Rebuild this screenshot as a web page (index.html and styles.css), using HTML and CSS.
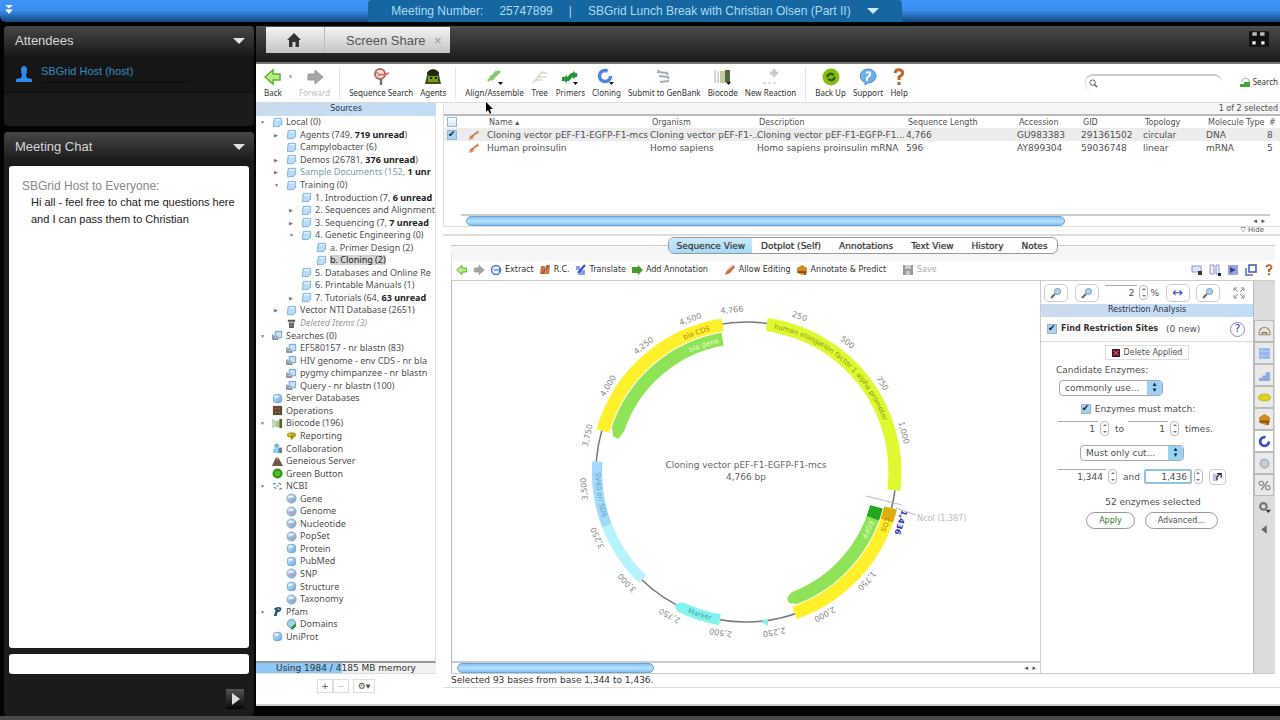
FILE: index.html
```html
<!DOCTYPE html>
<html lang="en">
    <head>
        <meta charset="utf-8">
        <title>Screen Share</title>
        <meta name="viewport" content="width=device-width, initial-scale=1.0">
        <link rel="stylesheet" href="styles.css">
    </head>
<body>
    <!-- icon set -->
    <svg class="defs" aria-hidden="true">
        <linearGradient id="gBlue" x1="0" y1="0" x2="1" y2="1"><stop offset="0" stop-color="#d9efff"/><stop offset="1" stop-color="#5fa4dc"/></linearGradient>
        <symbol id="folder" viewBox="0 0 12 12"><path d="M2.500 1.500h8v7l-1.500 0-1 2h-6.500v-2z" fill="#b9dcf8" stroke="#78aede"/><path d="M3.500 3h6" stroke="#e6f5ff" stroke-width="1.500"/></symbol>
        <symbol id="search-folder" viewBox="0 0 12 12"><path d="M3.500 1.500h7v7h-7z" fill="#c4e0f8" stroke="#6f9ac9"/><path d="M1 5v5h6" fill="none" stroke="#667a99" stroke-width="1.500"/><circle cx="4" cy="8" r="1.500" fill="#fff" stroke="#667"/></symbol>
        <symbol id="trash" viewBox="0 0 12 12"><path d="M2 2h8v2H2zM3 5h6l-.5 6h-5z" fill="#555"/><path d="M4.500 5v5M6 5v5M7.500 5v5" stroke="#aaa" stroke-width=".5"/></symbol>
        <symbol id="globe" viewBox="0 0 12 12"><circle cx="6" cy="6" r="5" fill="url(#gBlue)" stroke="#8aa3bd"/><path d="M3 4h5" stroke="#fff" stroke-width="1.500"/><path d="M2 7.500h8" stroke="#d08a92"/></symbol>
        <symbol id="globe-blue" viewBox="0 0 12 12"><rect x="1.500" y="1.500" width="9" height="9" rx="3" fill="url(#gBlue)" stroke="#7aa5cf"/><path d="M3 4h4" stroke="#fff" stroke-width="1.500"/></symbol>
        <symbol id="ops" viewBox="0 0 12 12"><path d="M1 1h10v10H1z" fill="#5c4632"/><path d="M3 3h2v2H3zM7 3h2v2H7zM3 7h2v2H3zM7 7h2v2H7z" fill="#8f6a49"/></symbol>
        <symbol id="barcode" viewBox="0 0 12 12"><path d="M1 1v10M3 2v8" stroke="#9aa58c"/><path d="M4 3h4v7H4z" fill="#a9c47e"/><path d="M8 1h3v10H8z" fill="#4c6534"/></symbol>
        <symbol id="report" viewBox="0 0 12 12"><ellipse cx="6" cy="5.500" rx="5" ry="3" fill="#b8a416"/><path d="M5 7h4l-3 4z" fill="#8d7c0e"/><circle cx="4" cy="5" r="1" fill="#f3e87b"/></symbol>
        <symbol id="people" viewBox="0 0 12 12"><circle cx="5" cy="3" r="2.500" fill="#6db6e3"/><path d="M1 11V7l4-2 3 2v4z" fill="#8bcdf0"/><path d="M7 5h4v6H7z" fill="#5d87a7"/></symbol>
        <symbol id="volcano" viewBox="0 0 12 12"><path d="M0 11l4-9h3l5 9z" fill="#6e5449"/><path d="M4 2l2 4 1-4z" fill="#c97b5b"/></symbol>
        <symbol id="green-dot" viewBox="0 0 12 12"><circle cx="6" cy="6" r="5.500" fill="#2f9a12"/><circle cx="6" cy="6" r="3" fill="#56bb2c"/></symbol>
        <symbol id="ncbi" viewBox="0 0 12 12"><path d="M1 3h3M7 2l3 2M2 7l3 1M8 9l3-1M5 5l2 1" stroke="#7b8ea3" stroke-width="1.500"/></symbol>
        <symbol id="pfam" viewBox="0 0 12 12"><path d="M2 3q4-3 8-1 1 4-4 5l-1 4H2l2-6z" fill="#1f5478"/><path d="M6 3.500h2" stroke="#9cc4dd" stroke-width="1.500"/></symbol>
        <symbol id="domains" viewBox="0 0 12 12"><circle cx="6" cy="5" r="4.500" fill="#9fd4e4" stroke="#5a94a4"/><path d="M5 10l5-5 1 3-4 4z" fill="#2e8d34"/></symbol>
        <symbol id="left-green" viewBox="0 0 18 18"><path d="M1 9l8-7v4h7v6H9v4z" fill="#b6ec84" stroke="#5eb530" stroke-width="1.500"/></symbol>
        <symbol id="right-gray" viewBox="0 0 18 18"><path d="M17 9L9 2v4H2v6h7v4z" fill="#a5a5a5" stroke="#999"/></symbol>
        <symbol id="seq-search" viewBox="0 0 18 18"><circle cx="8" cy="6" r="5" fill="#f4e4df" stroke="#b06a5f" stroke-width="2"/><path d="M4 4q5 5 13 1M6 8q4-3 8 0" stroke="#dd6a5c" fill="none" stroke-width="1.500"/><path d="M9 11v6" stroke="#8a6a58" stroke-width="2.500"/></symbol>
        <symbol id="agents" viewBox="0 0 18 18"><path d="M3 7q1-6 6-6t6 6l2 9H1z" fill="#3d5214"/><ellipse cx="9" cy="5" rx="6" ry="3" fill="#22280e"/><path d="M4 8h10v6H4z" fill="#779b1a"/><path d="M6 10h2M11 10h2" stroke="#171e05" stroke-width="2"/></symbol>
        <symbol id="align" viewBox="0 0 18 18"><path d="M2 13L11 3M5 12l9-9M4 8l4 3" stroke="#86cb70" stroke-width="2.500"/><path d="M12 14h5l-2.500 3z" fill="#111"/></symbol>
        <symbol id="tree-ic" viewBox="0 0 18 18"><path d="M2 15l5-6 5-6M7 9h8M4 12h7M9 5h7" stroke="#d6ddcb" stroke-width="1.500" fill="none"/></symbol>
        <symbol id="primer" viewBox="0 0 18 18"><path d="M1 11h6l4-4h5" stroke="#23973a" stroke-width="4" fill="none"/><path d="M12 3l5 4-5 4zM6 7l-5 4 5 4z" fill="#23973a"/><path d="M12 14h5l-2.500 3z" fill="#111"/></symbol>
        <symbol id="clone" viewBox="0 0 18 18"><circle cx="8" cy="8" r="5.500" fill="none" stroke="#4c86e2" stroke-width="3.500" stroke-dasharray="28 8"/><path d="M12 14h5l-2.500 3z" fill="#111"/></symbol>
        <symbol id="submit" viewBox="0 0 18 18"><path d="M4 2l-1 2 9 1 1 2M4 8l9 1 1 2M5 14l9-1" stroke="#a3b1b6" stroke-width="2" fill="none"/></symbol>
        <symbol id="bio" viewBox="0 0 18 18"><path d="M1 2v13M4 3v12" stroke="#abb2a4"/><path d="M6 3h6v12H6z" fill="#bdcfa0"/><path d="M11 2h5v12h-5z" fill="#526a3c"/><path d="M12 14h5l-2.500 3z" fill="#111"/></symbol>
        <symbol id="reaction" viewBox="0 0 18 18"><path d="M12 1v8M8 5h8" stroke="#c9c9c9" stroke-width="3"/><path d="M1 15h13" stroke="#ddd" stroke-width="2" stroke-dasharray="3 2"/></symbol>
        <symbol id="backup" viewBox="0 0 18 18"><circle cx="9" cy="9" r="8.500" fill="#86bd10"/><path d="M5 9q2-5 7-2M13 9q-2 5-7 2" stroke="#34610a" stroke-width="2.500" fill="none"/></symbol>
        <symbol id="support" viewBox="0 0 18 18"><path d="M9 1a8 7 0 0 1 0 14l-3 2v-2.500A7.500 7 0 0 1 9 1z" fill="#6db0ee" stroke="#4b8cd2"/><path d="M7 5q5-2 4 2l-3 3v3" stroke="#fff" stroke-width="2" fill="none"/></symbol>
        <symbol id="help" viewBox="0 0 18 18"><path d="M5 5q1-4 5-3t2 5L9 9v3M9 14v3" stroke="#b9652c" stroke-width="3" fill="none"/></symbol>
        <symbol id="zoom-ic" viewBox="0 0 12 12"><circle cx="7.500" cy="4.500" r="3" fill="#a8d5f5" stroke="#7898ac"/><path d="M5 7l-4 4" stroke="#666" stroke-width="2"/></symbol>
        <symbol id="pencil" viewBox="0 0 12 12"><path d="M1 11l2-5 6-5 2 2-5 6z" fill="#c9663f"/><path d="M3 7l6-5" stroke="#f4c3a5"/></symbol>
        <symbol id="dna" viewBox="0 0 12 12"><path d="M1 11l1-4 4-2 4-4 1 3-4 2-2 4z" fill="#dd9a68"/><path d="M2 9l7-6" stroke="#b5673a" fill="none"/></symbol>
        <symbol id="extract" viewBox="0 0 12 12"><circle cx="6" cy="6" r="4.500" fill="#e6f0ff" stroke="#4a7bd0" stroke-width="1.500"/><path d="M4 6h7M9 4l2 2-2 2" stroke="#3264c5" fill="none"/></symbol>
        <symbol id="rc" viewBox="0 0 12 12"><path d="M2 2h4v8H1zM7 1h4l-1 9H6z" fill="#c97546"/><path d="M3 10l6-8" stroke="#8c3f20"/></symbol>
        <symbol id="translate" viewBox="0 0 12 12"><path d="M1 2h4v4H1zM6 6h4v5H3z" fill="#8d9df0"/><path d="M3 9l7-8" stroke="#3848c4" stroke-width="2"/></symbol>
        <symbol id="add-ann" viewBox="0 0 12 12"><path d="M1 3h6V1l5 5-5 5V9H1z" fill="#479c2b"/></symbol>
        <symbol id="box" viewBox="0 0 12 12"><path d="M1 4l5-3 5 3v5l-4 2-6-2z" fill="#d28a26"/><path d="M2 8h7v3" stroke="#8a5412" stroke-width="2" fill="none"/></symbol>
        <symbol id="save" viewBox="0 0 12 12"><path d="M1 1h10v10H1z" fill="#999"/><path d="M3 1h6v4H3zM4 7h4v4H4z" fill="#ccc"/></symbol>
    </svg>

    <header class="topbar">
        <svg class="chevrons" viewBox="0 0 8 12"><path d="M0 1h8L4 5zM0 6h8l-4 5z" fill="#fff"/></svg>
        <div class="meeting">
            <span>Meeting Number:</span><span class="meeting-id">25747899</span><span class="bar">|</span><span>SBGrid Lunch Break with Christian Olsen (Part II)</span>
            <i class="down"></i>
        </div>
    </header>

    <div class="main">
        <aside class="side">
            <section class="panel attendees">
                <h2>Attendees <i class="down"></i></h2>
                <div class="person">
                    <svg viewBox="0 0 16 16"><path d="M5 4q0-4 3-4t3 4-1 5l1 3 5 1v3H0v-3l5-1 1-3q-1-1-1-5z" fill="#2c8cf0"/></svg>
                    <span>SBGrid Host (host)</span>
                </div>
            </section>
            <section class="panel chat">
                <h2>Meeting Chat <i class="down"></i></h2>
                <div class="log">
                    <p class="from">SBGrid Host to Everyone:</p>
                    <p class="msg">Hi all - feel free to chat me questions here and I can pass them to Christian</p>
                </div>
                <input class="chat-input" type="text" aria-label="Message">
                <button class="send" aria-label="Send"><svg viewBox="0 0 18 18"><path d="M6 3l8 6-8 6z" fill="#ddd"/></svg></button>
            </section>
        </aside>

        <div class="stage">
            <nav class="tabs">
                <button class="tab home" aria-label="Home"><svg viewBox="0 0 14 14"><path d="M7 0l7 7h-2v7H8.500V9h-3v5H2V7H0z" fill="#333"/></svg></button>
                <button class="tab">Screen Share <span class="close">×</span></button>
                <svg class="full" viewBox="0 0 18 14"><path d="M0 0h18v14H0z" fill="#111"/><path d="M3 1h4v3H3zM10 1h4v3h-4z" fill="#bbb"/><path d="M3 9h3v3H3zM11 9h3v3h-3z" fill="#eee"/></svg>
            </nav>

            <div class="app">
                <div class="toolbar">
                    <button><svg><use href="#left-green"/></svg>Back</button>
                    <i class="dot"></i>
                    <button class="off"><svg><use href="#right-gray"/></svg>Forward</button>
                    <i class="sep"></i>
                    <button><svg><use href="#seq-search"/></svg>Sequence Search</button>
                    <button><svg><use href="#agents"/></svg>Agents</button>
                    <i class="sep"></i>
                    <button><svg><use href="#align"/></svg>Align/Assemble</button>
                    <button><svg><use href="#tree-ic"/></svg>Tree</button>
                    <button><svg><use href="#primer"/></svg>Primers</button>
                    <button><svg><use href="#clone"/></svg>Cloning</button>
                    <button><svg><use href="#submit"/></svg>Submit to GenBank</button>
                    <button><svg><use href="#bio"/></svg>Biocode</button>
                    <button><svg><use href="#reaction"/></svg>New Reaction</button>
                    <i class="sep"></i>
                    <button><svg><use href="#backup"/></svg>Back Up</button>
                    <button><svg><use href="#support"/></svg>Support</button>
                    <button><svg><use href="#help"/></svg>Help</button>
                    <div class="find">
                        <svg viewBox="0 0 10 10"><circle cx="4" cy="4" r="3" fill="none" stroke="#555"/><path d="M6 6l3 3" stroke="#555" stroke-width="1.500"/></svg>
                        <input type="text" aria-label="Search">
                    </div>
                    <button class="more"><svg viewBox="0 0 12 12"><path d="M3 6V4q3-4 7 0v2" fill="none" stroke="#aaa"/><path d="M1 8h4V6h6v5H1z" fill="#4aa63a"/></svg>Search</button>
                </div>

                <div class="body">
                    <div class="sources">
                        <h3 class="bluebar">Sources</h3>
                        <ul class="tree">
                            <li class="open"><svg><use href="#folder"/></svg>Local (0)</li>
                            <li class="l1 shut"><svg><use href="#folder"/></svg>Agents (749, <b>719 unread</b>)</li>
                            <li class="l1"><svg><use href="#folder"/></svg>Campylobacter (6)</li>
                            <li class="l1 shut"><svg><use href="#folder"/></svg>Demos (26781, <b>376 unread</b>)</li>
                            <li class="l1 shut sample"><svg><use href="#folder"/></svg>Sample Documents (152, <b>1 unr</b></li>
                            <li class="l1 open"><svg><use href="#folder"/></svg>Training (0)</li>
                            <li class="l2"><svg><use href="#folder"/></svg>1. Introduction (7, <b>6 unread</b></li>
                            <li class="l2 shut"><svg><use href="#folder"/></svg>2. Sequences and Alignment</li>
                            <li class="l2 shut"><svg><use href="#folder"/></svg>3. Sequencing (7, <b>7 unread</b></li>
                            <li class="l2 open"><svg><use href="#folder"/></svg>4. Genetic Engineering (0)</li>
                            <li class="l3"><svg><use href="#folder"/></svg>a. Primer Design (2)</li>
                            <li class="l3"><svg><use href="#folder"/></svg><span class="picked">b. Cloning (2)</span></li>
                            <li class="l2"><svg><use href="#folder"/></svg>5. Databases and Online Re</li>
                            <li class="l2"><svg><use href="#folder"/></svg>6. Printable Manuals (1)</li>
                            <li class="l2 shut"><svg><use href="#folder"/></svg>7. Tutorials (64, <b>63 unread</b></li>
                            <li class="l1 shut"><svg><use href="#folder"/></svg>Vector NTI Database (2651)</li>
                            <li class="l1 deleted"><svg><use href="#trash"/></svg>Deleted Items (3)</li>
                            <li class="open"><svg><use href="#search-folder"/></svg>Searches (0)</li>
                            <li class="l1"><svg><use href="#search-folder"/></svg>EF580157 - nr blastn (83)</li>
                            <li class="l1"><svg><use href="#search-folder"/></svg>HIV genome - env CDS - nr bla</li>
                            <li class="l1"><svg><use href="#search-folder"/></svg>pygmy chimpanzee - nr blastn</li>
                            <li class="l1"><svg><use href="#search-folder"/></svg>Query - nr blastn (100)</li>
                            <li><svg><use href="#globe-blue"/></svg>Server Databases</li>
                            <li><svg><use href="#ops"/></svg>Operations</li>
                            <li class="open"><svg><use href="#barcode"/></svg>Biocode (196)</li>
                            <li class="l1"><svg><use href="#report"/></svg>Reporting</li>
                            <li><svg><use href="#people"/></svg>Collaboration</li>
                            <li><svg><use href="#volcano"/></svg>Geneious Server</li>
                            <li><svg><use href="#green-dot"/></svg>Green Button</li>
                            <li class="open"><svg><use href="#ncbi"/></svg>NCBI</li>
                            <li class="l1"><svg><use href="#globe"/></svg>Gene</li>
                            <li class="l1"><svg><use href="#globe"/></svg>Genome</li>
                            <li class="l1"><svg><use href="#globe"/></svg>Nucleotide</li>
                            <li class="l1"><svg><use href="#globe"/></svg>PopSet</li>
                            <li class="l1"><svg><use href="#globe-blue"/></svg>Protein</li>
                            <li class="l1"><svg><use href="#globe-blue"/></svg>PubMed</li>
                            <li class="l1"><svg><use href="#globe"/></svg>SNP</li>
                            <li class="l1"><svg><use href="#globe-blue"/></svg>Structure</li>
                            <li class="l1"><svg><use href="#globe"/></svg>Taxonomy</li>
                            <li class="open"><svg><use href="#pfam"/></svg>Pfam</li>
                            <li class="l1"><svg><use href="#domains"/></svg>Domains</li>
                            <li><svg><use href="#globe-blue"/></svg>UniProt</li>
                        </ul>
                        <div class="memory">Using 1984 / 4185 MB memory</div>
                        <div class="tree-tools">
                            <button>+</button><button class="dim">−</button><button class="gear">⚙▾</button>
                        </div>
                    </div>

                    <div class="work">
                        <div class="docs">
                            <div class="count">1 of 2 selected</div>
                            <table>
                                <colgroup><col class="c-check"><col class="c-icon"><col class="c-name"><col class="c-org"><col class="c-desc"><col class="c-len"><col class="c-acc"><col class="c-gid"><col class="c-topo"><col class="c-mol"><col></colgroup>
                                <thead>
                                    <tr><th><input type="checkbox" aria-label="All"></th><th></th><th>Name ▴</th><th>Organism</th><th>Description</th><th>Sequence Length</th><th>Accession</th><th>GID</th><th>Topology</th><th>Molecule Type</th><th>#</th></tr>
                                </thead>
                                <tbody>
                                    <tr class="selected"><td><input type="checkbox" checked aria-label="Cloning vector"></td><td><svg><use href="#dna"/></svg></td><td>Cloning vector pEF-F1-EGFP-F1-mcs</td><td>Cloning vector pEF-F1-...</td><td>Cloning vector pEF-F1-EGFP-F1...</td><td>4,766</td><td>GU983383</td><td>291361502</td><td>circular</td><td>DNA</td><td>8</td></tr>
                                    <tr><td></td><td><svg><use href="#dna"/></svg></td><td>Human proinsulin</td><td>Homo sapiens</td><td>Homo sapiens proinsulin mRNA</td><td>596</td><td>AY899304</td><td>59036748</td><td>linear</td><td>mRNA</td><td>5</td></tr>
                                </tbody>
                            </table>
                            <div class="scroll docs-scroll"><div class="thumb"></div><span>◂&nbsp;&nbsp;▸</span></div>
                        </div>
                        <div class="hide">▽ Hide</div>

                        <div class="viewer">
                            <div class="views">
                                <button class="on">Sequence View</button><button>Dotplot (Self)</button><button>Annotations</button><button>Text View</button><button>History</button><button>Notes</button>
                            </div>
                            <div class="actions">
                                <button aria-label="Previous"><svg><use href="#left-green"/></svg></button>
                                <button aria-label="Next"><svg><use href="#right-gray"/></svg></button>
                                <button><svg><use href="#extract"/></svg>Extract</button>
                                <button><svg><use href="#rc"/></svg>R.C.</button>
                                <button><svg><use href="#translate"/></svg>Translate</button>
                                <button><svg><use href="#add-ann"/></svg>Add Annotation</button>
                                <button class="spaced"><svg><use href="#pencil"/></svg>Allow Editing</button>
                                <button><svg><use href="#box"/></svg>Annotate &amp; Predict</button>
                                <button class="spaced off"><svg><use href="#save"/></svg>Save</button>
                                <div class="right">
                                    <svg viewBox="0 0 12 12"><path d="M1 2h9v6H1z" fill="#dfe5fb" stroke="#8a96cc"/><path d="M7 7h4v4H7z" fill="#335"/></svg>
                                    <svg viewBox="0 0 12 12"><path d="M1 1h4v9H1zM7 1h3v9H7z" fill="#eef" stroke="#8a96cc"/><path d="M9 9h3v3H9z" fill="#224"/></svg>
                                    <svg viewBox="0 0 12 12"><path d="M1 1h10v10H1z" fill="#98a3dc"/><path d="M3 3l6 3-6 3z" fill="#3b478f"/></svg>
                                    <svg viewBox="0 0 12 12"><path d="M4 1h7v7H4z" fill="#fff" stroke="#4458a8" stroke-width="1.500"/><path d="M1 4v7h7" fill="none" stroke="#7d8fd6" stroke-width="2"/></svg>
                                    <svg><use href="#help"/></svg>
                                </div>
                            </div>

                            <div class="split">
                                <div class="canvas">
                                    <svg class="plasmid" viewBox="0 0 588 380">
                                        <g transform="translate(294 191)">
                                            <defs>
                                                <path id="outer" d="M0 146A146 146 0 1 1 1 146"/>
                                                <path id="inner" d="M0 132A132 132 0 1 1 1 132"/>
                                                <path id="back" d="M0 -151A151 151 0 1 0 1 -151"/>
                                            </defs>
                                            <circle r="150" fill="none" stroke="#777" stroke-width="1.500"/>
                                            <!-- arcs start at 3 o'clock, so turn each by its angle minus 90 -->
                                            <g class="arcs" fill="none">
                                                <circle r="149" pathLength="360" stroke="#e0f832" stroke-dasharray="89 271" transform="rotate(-82)"/>
                                                <circle r="149" pathLength="360" stroke="#fff02c" stroke-dasharray="65 295" transform="rotate(-164)"/>
                                                <circle r="135" pathLength="360" stroke="#8ee356" stroke-dasharray="62 298" transform="rotate(-162)"/>
                                                <circle r="149" pathLength="360" stroke="#b5f3fd" stroke-dasharray="50 310" transform="rotate(134)" stroke-width="10"/>
                                                <circle r="149" pathLength="360" stroke="#a3d9fb" stroke-dasharray="25 335" transform="rotate(159)" stroke-width="10"/>
                                                <circle r="150" pathLength="360" stroke="#83f4ed" stroke-dasharray="16 344" transform="rotate(100)" stroke-width="11"/>
                                                <circle r="149" pathLength="360" stroke="#fff02c" stroke-dasharray="57 303" transform="rotate(14)"/>
                                                <circle r="149" pathLength="360" stroke="#dcae12" stroke-dasharray="5 355" transform="rotate(14)"/>
                                                <circle r="135" pathLength="360" stroke="#8ee356" stroke-dasharray="54 306" transform="rotate(15)"/>
                                                <circle r="135" pathLength="360" stroke="#22a81c" stroke-dasharray="5 355" transform="rotate(15)"/>
                                            </g>
                                            <path d="M-134 -44.500L-133 -36L-128 -33L-122 -40.500zM51 132L43 131L41 126L46 119.500z" fill="#8ee356"/>
                                            <path d="M15 150l7-4v8zM-68 140L-72 133L-63 130z" fill="#83f4ed"/>
                                            <path d="M120 24l36 9M150 36l20 7" stroke="#aaa" stroke-width=".8"/>
                                            <g class="ann">
                                                <text fill="#8c9a18"><textPath href="#outer" startOffset="53%">human elongation factor 1 alpha promoter</textPath></text>
                                                <text fill="#b08820"><textPath href="#outer" startOffset="43%">bla CDS</textPath></text>
                                                <text fill="#e8ffd5"><textPath href="#inner" startOffset="43%">bla gene</textPath></text>
                                                <text fill="#6c9fc7"><textPath href="#back" startOffset="25%">SV40 ori SDS</textPath></text>
                                                <text fill="#b08820"><textPath href="#outer" startOffset="80%">CDS</textPath></text>
                                                <text fill="#e8ffd5"><textPath href="#inner" startOffset="81%">EGFP</textPath></text>
                                                <text fill="#3fa8a0" transform="rotate(18) translate(0 152)" text-anchor="middle">Marker</text>
                                            </g>
                                            <g class="ticks">
                                                <text transform="rotate(-5) translate(0 -160)">4,766</text>
                                                <text transform="rotate(19) translate(0 -162)">250</text>
                                                <text transform="rotate(38) translate(0 -162)">500</text>
                                                <text transform="rotate(57) translate(0 -160)">750</text>
                                                <text transform="rotate(76) translate(0 -160)">1,000</text>
                                                <text class="here" transform="rotate(108) translate(0 -160)">1,436</text>
                                                <text transform="rotate(132) translate(0 -160)">1,750</text>
                                                <text transform="rotate(151) translate(0 -160)">2,000</text>
                                                <text transform="rotate(170) translate(0 -160)">2,250</text>
                                                <text transform="rotate(189) translate(0 -160)">2,500</text>
                                                <text transform="rotate(208) translate(0 -160)">2,750</text>
                                                <text transform="rotate(227) translate(0 -160)">3,000</text>
                                                <text transform="rotate(246) translate(0 -160)">3,250</text>
                                                <text transform="rotate(264) translate(0 -160)">3,500</text>
                                                <text transform="rotate(283) translate(0 -160)">3,750</text>
                                                <text transform="rotate(302) translate(0 -160)">4,000</text>
                                                <text transform="rotate(321) translate(0 -160)">4,250</text>
                                                <text transform="rotate(340) translate(0 -160)">4,500</text>
                                            </g>
                                            <text class="site" x="171" y="49">NcoI (1,387)</text>
                                            <text class="label" y="-4">Cloning vector pEF-F1-EGFP-F1-mcs</text>
                                            <text class="label" y="8">4,766 bp</text>
                                        </g>
                                    </svg>
                                    <div class="scroll map-scroll"><div class="thumb"></div><span>◂&nbsp;&nbsp;▸</span></div>
                                </div>

                                <div class="options">
                                    <div class="zooms">
                                        <button aria-label="Zoom in"><svg><use href="#zoom-ic"/></svg></button>
                                        <button aria-label="Zoom out"><svg><use href="#zoom-ic"/></svg></button>
                                        <label class="pct"><input type="text" value="2"><i class="spin"></i>%</label>
                                        <button class="blue" aria-label="Fit width">↔</button>
                                        <button aria-label="Zoom selection"><svg><use href="#zoom-ic"/></svg></button>
                                        <button class="plain" aria-label="Full view"><svg viewBox="0 0 12 12"><path d="M1 4V1h3M8 1h3v3M11 8v3H8M4 11H1V8M2 2l3 3M10 2L7 5M10 10L7 7M2 10l3-3" fill="none" stroke="#888"/></svg></button>
                                    </div>
                                    <h3 class="bluebar">Restriction Analysis</h3>
                                    <div class="find-sites">
                                        <label><input type="checkbox" checked><b>Find Restriction Sites</b></label><span>(0 new)</span>
                                        <button class="round" aria-label="Help">?</button>
                                    </div>
                                    <div class="form">
                                        <button class="delete"><svg viewBox="0 0 10 10"><path d="M0 0h10v10H0z" fill="#48121e"/><path d="M2 2l6 6M8 2L2 8" stroke="#e0566b" stroke-width="1.500"/></svg>Delete Applied</button>
                                        <label class="cand" for="enzymes">Candidate Enzymes:</label>
                                        <div class="drop start"><select id="enzymes"><option>commonly use...</option></select><i>▴<br>▾</i></div>
                                        <label class="match"><input type="checkbox" checked>Enzymes must match:</label>
                                        <div class="line"><input type="text" value="1" aria-label="Least cuts"><i class="spin"></i><span>to</span><input type="text" value="1" aria-label="Most cuts"><i class="spin"></i><span>times.</span></div>
                                        <div class="drop mid"><select aria-label="Cut rule"><option>Must only cut...</option></select><i>▴<br>▾</i></div>
                                        <div class="line wide"><input type="text" value="1,344" aria-label="From base"><i class="spin"></i><span>and</span><input class="focus" type="text" value="1,436" aria-label="To base"><i class="spin"></i><button class="pick" aria-label="Use selection"><svg viewBox="0 0 12 12"><path d="M1 2h5v9H1z" fill="#b9c3ee"/><path d="M6 10V6l4-4M6 2h5v5" fill="none" stroke="#223" stroke-width="1.500"/></svg></button></div>
                                        <p>52 enzymes selected</p>
                                        <div class="buttons"><button class="pill apply">Apply</button><button class="pill">Advanced...</button></div>
                                    </div>
                                </div>

                                <div class="strip">
                                    <button aria-label="General"><svg viewBox="0 0 12 12"><path d="M1 7a5 5 0 0 1 10 0v2H1z" fill="#e7e1cb" stroke="#98906f"/><path d="M4 9V7h4v2" stroke="#777" fill="none"/></svg></button>
                                    <button aria-label="Display"><svg viewBox="0 0 12 12"><path d="M1 1h10v10H1z" fill="#97b4ee"/><path d="M1 4h10M1 8h10M4 1v10" stroke="#b3c8f5"/></svg></button>
                                    <button aria-label="Graphs"><svg viewBox="0 0 12 12"><path d="M1 11V8h3V6h3V3h4v8z" fill="#8ea9dc"/></svg></button>
                                    <button aria-label="Annotations"><svg viewBox="0 0 12 12"><path d="M0 6l3-3h6l3 3-3 3H3z" fill="#ded321" stroke="#c4ba20"/></svg></button>
                                    <button aria-label="Live annotate"><svg><use href="#box"/></svg></button>
                                    <button class="on" aria-label="Restriction"><svg viewBox="0 0 18 18"><circle cx="9" cy="9" r="6" fill="none" stroke="#3452c9" stroke-width="4" stroke-dasharray="29 9"/></svg></button>
                                    <button aria-label="Translation"><svg viewBox="0 0 12 12"><circle cx="6" cy="6" r="4" fill="#c4ccd6" stroke="#9aa5b3"/></svg></button>
                                    <button aria-label="Statistics"><svg viewBox="0 0 12 12"><circle cx="3" cy="4" r="2" fill="none" stroke="#888"/><circle cx="9" cy="8" r="2" fill="none" stroke="#888"/><path d="M3 10l6-8" stroke="#777"/></svg></button>
                                    <button class="flat" aria-label="Settings"><svg viewBox="0 0 12 12"><circle cx="5" cy="5" r="3" fill="none" stroke="#777" stroke-width="2"/><path d="M7 8h5l-2.500 3z" fill="#333"/></svg></button>
                                    <button class="flat" aria-label="Collapse"><svg viewBox="0 0 12 12"><path d="M8 2v8L3 6z" fill="#666"/></svg></button>
                                </div>
                            </div>
                        </div>
                        <div class="status">Selected 93 bases from base 1,344 to 1,436.</div>
                    </div>
                </div>
            </div>
        </div>
    </div>
    <svg class="cursor" viewBox="0 0 8 12"><path d="M1 0v10l2-2 2 4 1-1-1-4h3z" fill="#000"/></svg>
</body>
</html>
```

FILE: styles.css
```css
* {
    box-sizing: border-box;
}
body {
    margin: 0;
    height: 100vh;
    display: flex;
    flex-direction: column;
    background: #030303;
    border-bottom: 4px solid #4a4a4a;
    overflow: hidden;
    font-family: "DejaVu Sans", sans-serif;
    font-size: 9px;
    line-height: 12px;
    color: #505050;
}
h2, h3, p, ul {
    margin: 0;
    padding: 0;
}
button, input, select {
    font: inherit;
    color: inherit;
    margin: 0;
    padding: 0;
    border: 0;
    background: none;
}
svg {
    flex: none;
}
.defs {
    position: absolute;
    width: 0;
    height: 0;
}
.cursor {
    position: absolute;
    left: 485px;
    top: 102px;
    width: 8px;
    height: 12px;
}
.down {
    border: 6px solid transparent;
    border-top-color: #e4e4e4;
    border-bottom: 0;
}

/* meeting bar */
.topbar {
    position: relative;
    flex: none;
    height: 22px;
    margin-bottom: 4px;
    padding-right: 10px;
    display: flex;
    justify-content: center;
    border-radius: 0 0 0 6px;
    background: linear-gradient(#3d94fb, #3b8ff0 45%, #14487e);
}
.chevrons {
    position: absolute;
    left: 5px;
    top: 4px;
    width: 8px;
    height: 11px;
}
.meeting {
    width: 42%;
    display: flex;
    align-items: center;
    justify-content: center;
    border-radius: 4px 4px 0 0;
    background: #16669f;
    color: #a8dcf8;
    font: 12px "Liberation Sans", sans-serif;
    white-space: pre;
}
.meeting-id {
    margin-left: 16px;
}
.bar {
    margin: 0 16px;
}
.meeting .down {
    margin-left: 16px;
    border-top-color: #c9ecff;
}

.main {
    flex: 1;
    min-height: 0;
    display: flex;
    gap: 2px;
}

/* left column */
.side {
    width: 254px;
    padding-left: 4px;
    display: flex;
    flex-direction: column;
    gap: 6px;
    font-family: "Liberation Sans", sans-serif;
}
.panel {
    background: #1b1b1b;
    border-radius: 4px;
}
.panel h2 {
    height: 30px;
    padding: 0 9px 0 11px;
    display: flex;
    align-items: center;
    justify-content: space-between;
    border-radius: 4px 4px 0 0;
    background: linear-gradient(#464646, #191919);
    color: #d6d6d6;
    font-size: 13px;
    font-weight: normal;
}
.attendees {
    height: 100px;
}
.person {
    height: 37px;
    padding: 2px 12px 0;
    display: flex;
    gap: 9px;
    border-bottom: 1px solid #0c0c0c;
    background: #161616;
    color: #2f8fc4;
    font-size: 11px;
    line-height: 26px;
}
.person svg {
    width: 16px;
    height: 16px;
    margin-top: 8px;
}
.person span {
    width: 146px;
    height: 25px;
    border-bottom: 1px solid #0a0a0a;
}
.chat {
    flex: 1;
    display: flex;
    flex-direction: column;
    padding-bottom: 7px;
}
.log {
    flex: 1;
    margin: 4px 5px 6px;
    padding: 13px 8px 0 13px;
    border-radius: 3px;
    background: #fff;
    font-size: 11px;
    line-height: 17px;
    color: #222;
}
.from {
    color: #888;
    font-size: 12px;
    line-height: 15px;
}
.msg {
    padding-left: 9px;
}
.chat-input {
    height: 20px;
    margin: 0 5px 15px;
    padding: 0 6px;
    border-radius: 3px;
    background: #fff;
}
.send {
    align-self: flex-end;
    width: 18px;
    height: 20px;
    margin-right: 10px;
    background: linear-gradient(#555, #050505);
}
.send svg {
    display: block;
    width: 18px;
    height: 18px;
}

/* shared screen */
.stage {
    flex: 1;
    min-width: 0;
    display: flex;
    flex-direction: column;
    padding-bottom: 10px;
}
.tabs {
    flex: none;
    height: 38px;
    padding: 1px 11px 9px 10px;
    display: flex;
    border-bottom: 2px solid #777;
    background: linear-gradient(#4b4b4b, #1a1a1a);
}
.tab {
    padding: 0 8px 0 21px;
    background: linear-gradient(#f4f4f4, #c4c4c4);
    color: #555;
    font: 13px "Liberation Sans", sans-serif;
}
.home {
    width: 59px;
    border-right: 1px solid #bbb;
}
.home svg {
    display: block;
    width: 14px;
    height: 14px;
}
.close {
    margin-left: 5px;
    color: #999;
}
.full {
    width: 20px;
    height: 16px;
    margin: 4px 0 0 auto;
}
.app {
    flex: 1;
    min-height: 0;
    display: flex;
    flex-direction: column;
    background: #fff;
    border-bottom: 2px solid #ccc;
}
.toolbar {
    flex: none;
    height: 39px;
    padding: 3px 0 0 8px;
    display: flex;
    gap: 7px;
    border-bottom: 1px solid #ddd;
    font-family: "Noto Sans", sans-serif;
    font-size: 8px;
    white-space: nowrap;
}
.toolbar button {
    display: flex;
    flex-direction: column;
    align-items: center;
    color: #333;
}
.toolbar button svg {
    width: 18px;
    height: 20px;
}
.toolbar .off {
    color: #bbb;
}
.dot {
    width: 3px;
    height: 3px;
    margin-top: 8px;
    background: #bbb;
}
.sep {
    height: 32px;
    margin: 0 2px;
    border-left: 1px solid #e4e4e4;
}
.find {
    width: 137px;
    height: 17px;
    margin: 7px 10px 0 auto;
    padding: 0 8px 0 3px;
    display: flex;
    align-items: center;
    border-top: 2px solid #ccc;
    border-left: 1px solid #ddd;
    border-radius: 8px;
}
.find svg {
    width: 9px;
    height: 9px;
}
.find input {
    flex: 1;
    min-width: 0;
}
.toolbar .more {
    flex-direction: row;
    gap: 2px;
    height: 30px;
    margin-right: 2px;
}
.toolbar .more svg {
    width: 12px;
    height: 12px;
}
.body {
    flex: 1;
    min-height: 0;
    display: flex;
    gap: 7px;
}
.bluebar {
    height: 13px;
    background: linear-gradient(90deg, #cbdbee, #c3ddf6);
    color: #234;
    font-size: 8px;
    font-weight: normal;
    text-align: center;
}

/* sources tree */
.sources {
    flex: none;
    width: 180px;
    display: flex;
    flex-direction: column;
}
.tree {
    flex: 1;
    padding-bottom: 18px;
    display: grid;
    grid-auto-rows: 1fr;
    border-right: 1px solid #e2e2e2;
    border-bottom: 2px solid #999;
    overflow: hidden;
    list-style: none;
    font-family: "Noto Sans", sans-serif;
}
.tree li {
    padding-left: 16px;
    display: flex;
    align-items: center;
    white-space: pre;
    overflow: hidden;
    line-height: 10px;
}
.tree li svg {
    width: 11px;
    height: 11px;
    margin-right: 3px;
}
.tree .l1 {
    padding-left: 30px;
}
.tree .l2 {
    padding-left: 45px;
}
.tree .l3 {
    padding-left: 60px;
}
.open::before, .shut::before {
    content: "▼";
    flex: none;
    width: 12px;
    margin-left: -12px;
    font-size: 5px;
    color: #777;
}
.shut::before {
    content: "▶";
}
.tree b {
    color: #222;
}
.tree .sample {
    color: #74a0ae;
}
.tree .deleted {
    color: #999;
    font-style: italic;
}
.picked {
    background: #d2d2d2;
    color: #222;
}
.memory {
    height: 11px;
    border-bottom: 1px solid #ddd;
    background: linear-gradient(90deg, #8ec8f6 48%, #f1f1f1 48%);
    text-align: center;
    line-height: 10px;
    color: #333;
}
.tree-tools {
    height: 30px;
    padding: 5px 0 0 61px;
    display: flex;
}
.tree-tools button {
    width: 16px;
    height: 14px;
    border: 1px solid #ddd;
    line-height: 11px;
}
.tree-tools .dim {
    color: #ccc;
}
.tree-tools .gear {
    width: 22px;
    margin-left: 4px;
}

/* document table */
.work {
    flex: 1;
    min-width: 0;
    display: flex;
    flex-direction: column;
}
.docs {
    height: 124px;
    display: flex;
    flex-direction: column;
    border-left: 1px solid #ddd;
    border-bottom: 1px solid #ddd;
}
.count {
    height: 13px;
    padding-right: 2px;
    border-bottom: 2px solid #bbb;
    background: #f5f5f5;
    font-size: 8px;
    text-align: right;
}
table {
    width: 100%;
    table-layout: fixed;
    border-collapse: collapse;
}
.c-check { width: 20px; }
.c-icon { width: 23px; }
.c-name { width: 163px; }
.c-org { width: 107px; }
.c-desc { width: 149px; }
.c-len { width: 111px; }
.c-acc { width: 64px; }
.c-gid { width: 62px; }
.c-topo { width: 63px; }
.c-mol { width: 61px; }
th, td {
    height: 13px;
    padding: 0;
    font-weight: normal;
    line-height: 12px;
    text-align: left;
    white-space: nowrap;
}
th {
    height: 12px;
    padding-left: 2px;
    font-size: 8px;
    line-height: 11px;
}
td svg {
    display: block;
    width: 12px;
    height: 12px;
    margin-left: 4px;
}
.selected {
    background: #ececec;
}
input[type=checkbox] {
    appearance: none;
    display: block;
    flex: none;
    width: 10px;
    height: 10px;
    margin-left: 3px;
    border: 1px solid #9bb6cb;
    background: linear-gradient(#fff, #cde6f7);
}
input[type=checkbox]:checked {
    background: #a6d3f3;
}
input[type=checkbox]:checked::after {
    content: "✔";
    display: block;
    font-size: 9px;
    line-height: 7px;
    color: #123;
}
th input[type=checkbox] {
    margin-left: 1px;
}
.scroll {
    flex: none;
    height: 12px;
    display: flex;
    align-items: center;
    justify-content: space-between;
    border-top: 2px solid #ccc;
    background: #fff;
    font-size: 7px;
    line-height: 8px;
}
.docs-scroll {
    margin: auto 10px 0 17px;
    padding: 0 5px;
}
.thumb {
    height: 10px;
    border: 1px solid #6aa5d6;
    border-radius: 5px;
    background: linear-gradient(#8bc1f2, #b7e2ff 50%, #86c2f4);
}
.docs-scroll .thumb {
    width: 75%;
}
.hide {
    height: 9px;
    padding-right: 16px;
    border-bottom: 2px solid #ddd;
    font-size: 7px;
    line-height: 7px;
    text-align: right;
}

/* sequence viewer */
.viewer {
    flex: 1;
    min-height: 0;
    margin: 1px 5px 0 8px;
    display: flex;
    flex-direction: column;
    background: linear-gradient(#fff 8px, #ccc 8px, #ccc 9px, #f6f6f6 9px, #f6f6f6 24px, #fff 24px);
}
.views {
    align-self: center;
    height: 17px;
    display: flex;
    border: 1px solid #999;
    border-radius: 6px;
    background: #fff;
    overflow: hidden;
}
.views button {
    padding: 0 9px;
    color: #333;
    text-shadow: 0 0 1px #888;
}
.views .on {
    padding: 0 7px;
    background: linear-gradient(#cdeafc, #a3dbfb);
}
.actions {
    height: 27px;
    padding: 5px 0 0 4px;
    display: flex;
    align-items: center;
    gap: 5px;
    border-left: 1px solid #ddd;
    border-bottom: 1px solid #ccc;
    font-size: 8px;
    white-space: nowrap;
}
.actions button {
    display: flex;
    align-items: center;
    gap: 3px;
    color: #333;
}
.actions svg {
    width: 12px;
    height: 12px;
}
.actions .spaced {
    margin-left: 11px;
}
.actions .off {
    color: #aaa;
}
.right {
    margin-left: auto;
    display: flex;
    gap: 6px;
}
.split {
    flex: 1;
    min-height: 0;
    display: flex;
    border-bottom: 1px solid #ccc;
}
.canvas {
    flex: 1;
    min-width: 0;
    display: flex;
    flex-direction: column;
    border-left: 1px solid #bbb;
    border-right: 1px solid #ccc;
}
.plasmid {
    flex: 1;
    min-height: 0;
    width: 100%;
}
.arcs {
    stroke-width: 13px;
}
.ann {
    font-size: 7px;
}
.ticks {
    font-size: 8px;
    text-anchor: middle;
    fill: #888;
}
.ticks .here {
    fill: #2431b5;
    font-weight: bold;
}
.site {
    font-size: 8px;
    fill: #bbb;
}
.label {
    font-size: 9px;
    text-anchor: middle;
    fill: #666;
}
.map-scroll {
    padding: 0 4px 0 5px;
}
.map-scroll .thumb {
    width: 34%;
}
.status {
    flex: none;
    height: 30px;
    padding-left: 8px;
    background: linear-gradient(#fff 13px, #ddd 13px, #ddd 14px, #fff 14px);
    color: #333;
}

/* restriction options */
.options {
    flex: none;
    width: 212px;
}
.zooms {
    height: 23px;
    padding: 2px 2px 2px 3px;
    display: flex;
    justify-content: space-between;
    align-items: center;
}
.zooms button {
    width: 24px;
    height: 18px;
    border: 1px solid #ccc;
    border-radius: 5px;
}
.zooms svg {
    display: block;
    width: 12px;
    height: 12px;
    margin: auto;
}
.zooms .plain {
    border: 0;
}
.zooms .blue {
    color: #3e4fd0;
    font-size: 13px;
}
.pct {
    display: flex;
    align-items: center;
}
.options input[type=text] {
    width: 40px;
    height: 15px;
    padding-right: 3px;
    border-top: 1px solid #aaa;
    text-align: right;
}
.options .pct input {
    width: 32px;
}
.spin {
    flex: none;
    width: 9px;
    height: 15px;
    margin: 0 2px;
    display: flex;
    flex-direction: column;
    justify-content: space-around;
    align-items: center;
    border: 1px solid #bbb;
    border-radius: 4px;
}
.spin::before, .spin::after {
    content: "";
    border: 2px solid transparent;
    border-bottom-color: #777;
    border-top: 0;
}
.spin::after {
    transform: rotate(180deg);
}
.find-sites {
    height: 25px;
    padding: 0 8px 0 6px;
    display: flex;
    align-items: center;
    gap: 8px;
    margin-bottom: 3px;
    border-bottom: 1px solid #ddd;
}
.find-sites b {
    font-size: 8px;
    color: #333;
}
.options label {
    display: flex;
    align-items: center;
}
.options input[type=checkbox] {
    margin: 0 4px 0 0;
}
.round {
    width: 15px;
    height: 15px;
    margin-left: auto;
    border: 1px solid #8585c8;
    border-radius: 50%;
    color: #4040a0;
    font-size: 11px;
    line-height: 12px;
}
.form {
    padding: 0 15px;
    display: flex;
    flex-direction: column;
    align-items: center;
}
.delete {
    height: 15px;
    padding: 0 6px;
    display: flex;
    align-items: center;
    gap: 4px;
    border: 1px solid #ddd;
    font-size: 8px;
}
.delete svg {
    width: 8px;
    height: 8px;
}
.form .cand {
    align-self: flex-start;
    height: 20px;
}
.drop {
    position: relative;
    height: 16px;
    width: 104px;
    border: 1px solid #aaa;
    border-radius: 4px;
    overflow: hidden;
}
.start {
    align-self: flex-start;
    margin-left: 3px;
}
.mid {
    margin-right: 30px;
}
.drop select {
    appearance: none;
    display: block;
    width: 100%;
    height: 14px;
    padding-left: 5px;
}
.drop i {
    position: absolute;
    top: 0;
    right: 0;
    width: 15px;
    height: 14px;
    background: #9bd3f7;
    color: #124;
    font-size: 7px;
    font-style: normal;
    line-height: 6px;
    text-align: center;
    pointer-events: none;
}
.match {
    height: 26px;
    margin-right: 18px;
}
.line {
    align-self: stretch;
    height: 13px;
    margin-bottom: 10px;
    padding-left: 2px;
    display: flex;
    align-items: center;
}
.line span {
    margin: 0 4px;
}
.wide {
    margin: 9px -6px 13px 0;
}
.options .wide input {
    width: 48px;
}
.options .wide .focus {
    border: 2px solid #8dc5e0;
    border-radius: 2px;
}
.pick {
    width: 17px;
    height: 16px;
    margin-left: 4px;
    border: 1px solid #ccc;
    border-radius: 4px;
}
.pick svg {
    display: block;
    width: 10px;
    height: 10px;
    margin: auto;
}
.form p {
    padding-left: 12px;
}
.buttons {
    display: flex;
    gap: 10px;
    margin-top: 4px;
    padding-left: 10px;
}
.pill {
    height: 17px;
    padding: 0 12px;
    border: 1px solid #999;
    border-radius: 9px;
    font-size: 8px;
}
.apply {
    color: #2d7a1d;
}
.strip {
    flex: none;
    width: 22px;
    padding-top: 39px;
    background: #dcdcdc;
    border-left: 1px solid #bbb;
}
.strip button {
    display: block;
    width: 20px;
    height: 22px;
    border: 1px solid #bbb;
    background: #e9e9e9;
}
.strip .on {
    background: #fff;
}
.strip .flat {
    border-color: transparent;
    background: none;
}
.strip svg {
    display: block;
    width: 13px;
    height: 13px;
    margin: auto;
}
```
